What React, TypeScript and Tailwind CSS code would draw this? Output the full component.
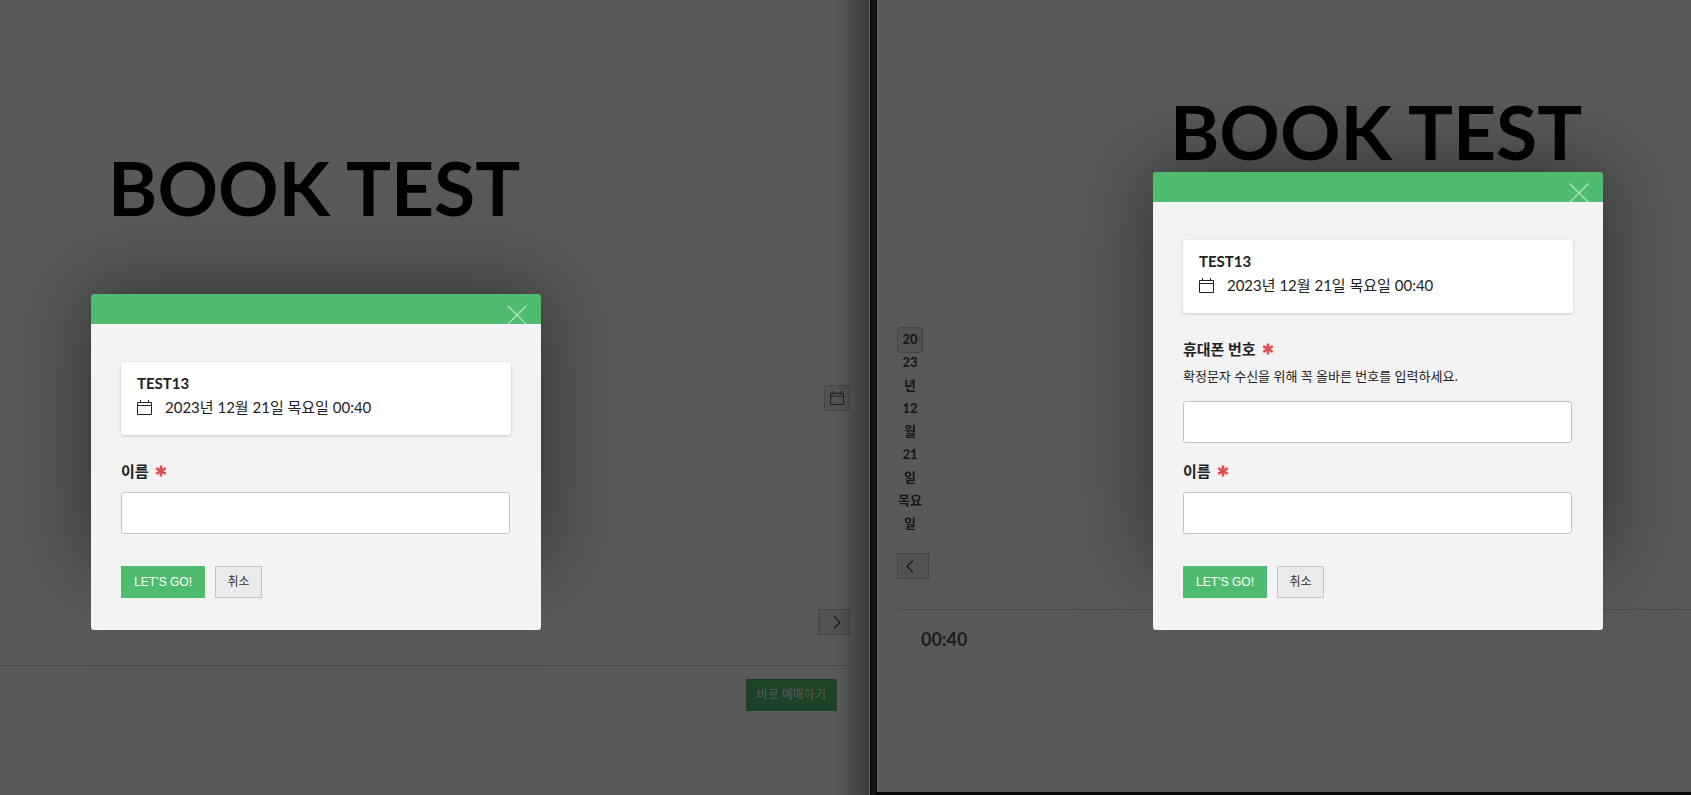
import type { ReactNode } from 'react';

function CalendarIcon({ size = 15 }: { size?: number }) {
  return (
    <svg width={size} height={size} viewBox="0 0 15 15" fill="none" stroke="currentColor" aria-hidden="true">
      <path d="M0.5 2.5h14v12h-14zM0.5 5.5h14M3.5 0v3M11.5 0v3" />
    </svg>
  );
}

function Asterisk() {
  return (
    <svg width="12" height="12" viewBox="0 0 12 12" stroke="#e04f4f" strokeWidth="2.6" aria-hidden="true">
      <path d="M6 0.4v11.2M1.2 3.2l9.6 5.6M10.8 3.2l-9.6 5.6" />
    </svg>
  );
}

function Field({ id, label, hint }: { id: string; label: string; hint?: string }) {
  return (
    <div className="pr-px">
      <label htmlFor={id} className="flex items-center gap-[6px] text-[15px] leading-6 font-bold">
        {label}
        <Asterisk />
      </label>
      {hint && (
        <p className="mt-[3px] font-['Noto_Sans','Noto_Sans_CJK_KR',sans-serif] text-[13px] leading-6">{hint}</p>
      )}
      <input
        id={id}
        type="text"
        className={`${hint ? 'mt-[13px]' : 'mt-[9px]'} block h-[42px] w-full rounded-[3px] border border-[#c4c4c4] bg-white px-3`}
      />
    </div>
  );
}

function BookingDialog({ children }: { children: ReactNode }) {
  return (
    <div role="dialog" aria-label="TEST13" className="relative isolate w-[450px]">
      {/* The glow stops short of the dialog's bottom edge */}
      <div className="absolute inset-x-0 top-0 bottom-[70px] -z-10 shadow-[0_0_75px_rgba(0,0,0,0.5)]" />
      <div className="flex h-[30px] justify-end overflow-hidden rounded-t-[3px] bg-[#4ebb6e] pt-[11px] pr-[14px]">
        <button type="button" aria-label="닫기" className="h-5 w-5">
          <svg width="20" height="20" viewBox="0 0 20 20" stroke="#b5e2c2" strokeWidth="1.3" aria-hidden="true">
            <path d="M0.5 0.5l19 19M19.5 0.5l-19 19" />
          </svg>
        </button>
      </div>
      <form className="rounded-b-[3px] bg-[#f3f3f3] px-[30px] pt-[38px] pb-8 text-[#222]">
        <div className="mb-6 h-[73px] rounded-[3px] bg-white px-4 pt-[9px] shadow-[0_1px_3px_rgba(0,0,0,0.18)]">
          <h2 className="text-[15px] leading-6 font-bold">TEST13</h2>
          <p className="flex items-center gap-[13px] text-[15px] leading-6">
            <CalendarIcon />
            2023년 12월 21일 목요일 00:40
          </p>
        </div>
        <div className="flex flex-col gap-4">{children}</div>
        <div className="mt-8 flex gap-[10px] text-[12px]">
          <button type="submit" className="h-8 bg-[#4ebb6e] px-[13px] font-['Liberation_Sans',sans-serif] text-white">
            LET’S GO!
          </button>
          <button type="button" className="h-8 w-[47px] border border-[#c4c4c4] bg-[#ebebeb] text-[#333]">
            취소
          </button>
        </div>
      </form>
    </div>
  );
}

const dateLines = ['20', '23', '년', '12', '월', '21', '일', '목요', '일'];

export default function App() {
  return (
    <div className="flex min-h-screen overflow-hidden bg-[#060708] font-['Lato','Noto_Sans_CJK_KR',sans-serif]">
      {/* Left window */}
      <section className="relative flex-[870] overflow-hidden border-r border-[#666] bg-white">
        <h1 className="pt-[139px] pl-[108px] text-[75px] leading-[96px] font-bold">BOOK TEST</h1>
        <div className="mt-[150px] mr-[19px] flex flex-col items-end border-b border-[#d4d4d4] pb-[30px] text-[#444]">
          <button
            type="button"
            aria-label="달력"
            className="flex h-[26px] w-[26px] items-center justify-center rounded-[3px] border border-[#c4c4c4] bg-[#ebebeb]"
          >
            <CalendarIcon size={14} />
          </button>
          <button
            type="button"
            aria-label="다음"
            className="mt-[198px] flex h-[26px] w-8 items-center justify-end border border-[#c4c4c4] bg-[#ebebeb] pr-2"
          >
            <svg width="8" height="13" viewBox="0 0 8 13" fill="none" stroke="currentColor" strokeWidth="1.2" aria-hidden="true">
              <path d="M1 0.5l6 6-6 6" />
            </svg>
          </button>
        </div>
        <div className="mt-[13px] mr-8 flex justify-end">
          <button type="button" className="h-8 bg-[#4ebb6e] px-[11px] text-[12px] text-white">바로 예매하기</button>
        </div>
        <div className="absolute inset-0 bg-black/65 pt-[294px] pl-[91px]">
          <BookingDialog>
            <Field id="name-left" label="이름" />
          </BookingDialog>
        </div>
        <div className="absolute inset-y-0 right-0 w-8 bg-linear-to-l from-black/35 to-transparent" />
      </section>

      <div className="w-[7px] border-x border-black bg-[#14161a]" />

      {/* Right window */}
      <section className="relative mb-[3px] flex-[814] overflow-hidden border-l border-[#6a6a6a] bg-white">
        <h1 className="pt-[83px] pl-[292px] text-[75px] leading-[96px] font-bold">BOOK TEST</h1>
        <div className="mt-[148px] ml-[19px] border-b border-[#d4d4d4] pb-[30px] text-[#444]">
          <button
            type="button"
            className="block h-[26px] w-[26px] rounded-[3px] border border-[#c4c4c4] bg-[#ebebeb] text-[13px] leading-[23px] font-bold"
          >
            {dateLines.map((line, i) => (
              <span key={i} className="block text-center whitespace-nowrap">{line}</span>
            ))}
          </button>
          <button
            type="button"
            aria-label="이전"
            className="mt-[200px] flex h-[26px] w-8 items-center border border-[#c4c4c4] bg-[#ebebeb] pl-2"
          >
            <svg width="8" height="13" viewBox="0 0 8 13" fill="none" stroke="currentColor" strokeWidth="1.2" aria-hidden="true">
              <path d="M7 0.5l-6 6 6 6" />
            </svg>
          </button>
        </div>
        <p className="mt-[17px] ml-[43px] text-[18px] leading-6 font-bold text-[#555]">00:40</p>
        <div className="absolute inset-0 bg-black/65 pt-[172px] pl-[275px]">
          <BookingDialog>
            <Field id="phone-right" label="휴대폰 번호" hint="확정문자 수신을 위해 꼭 올바른 번호를 입력하세요." />
            <Field id="name-right" label="이름" />
          </BookingDialog>
        </div>
      </section>
    </div>
  );
}
